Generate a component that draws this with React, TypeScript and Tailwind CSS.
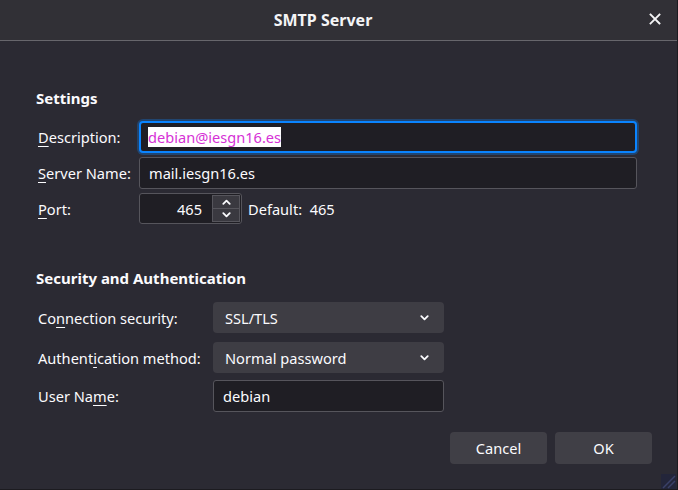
import React from "react";

const font = { fontFamily: '"Noto Sans", "Open Sans", sans-serif' };

function Chevron({ up = false, className = "" }: { up?: boolean; className?: string }) {
  return (
    <svg width="9" height="6" viewBox="0 0 9 6" className={className}>
      <path
        d={up ? "M1.3 4.8 L4.5 1.6 L7.7 4.8" : "M1.3 1.2 L4.5 4.4 L7.7 1.2"}
        fill="none"
        stroke="#fbfbfe"
        strokeWidth="1.8"
        strokeLinecap="round"
        strokeLinejoin="round"
      />
    </svg>
  );
}

function Select({ value }: { value: string }) {
  return (
    <div className="w-[231px] h-[31px] rounded-[4px] bg-[#3e3d44] flex items-center justify-between pl-[12px] pr-[15px] text-[#fbfbfe]">
      <span>{value}</span>
      <Chevron />
    </div>
  );
}

export default function App() {
  return (
    <div
      style={font}
      className="relative w-[678px] h-[490px] bg-[#2b2a33] flex flex-col border-r border-b border-[#1c1b20] text-[#fbfbfe] text-[14.6px] leading-[20px] overflow-hidden"
    >
      {/* Title bar */}
      <div className="h-[41px] shrink-0 bg-[#313036] border-b border-[#67666c] flex items-center relative">
        <div className="flex-1 flex justify-center pr-[31px] font-bold text-[16px] text-[#f4f4f6]">SMTP Server</div>
        <div className="absolute right-[16px] top-[13px]">
          <svg width="12" height="12" viewBox="0 0 12 12">
            <path d="M1.5 1.5 L10.5 10.5 M10.5 1.5 L1.5 10.5" stroke="#f4f4f6" strokeWidth="1.8" strokeLinecap="square" />
          </svg>
        </div>
      </div>

      {/* Body */}
      <div className="flex-1 flex flex-col pl-[36px] pr-[25px] pt-[47px]">
        <div className="font-bold text-[15px] leading-[20px]">Settings</div>

        <div className="mt-[13px] flex flex-col gap-[4px]">
          <div className="flex items-center">
            <div className="w-[103px] pl-[2px]">
              <span className="underline underline-offset-[3px]">D</span>escription:
            </div>
            <div className="flex-1 mr-[15px] h-[32px] rounded-[4px] border-2 border-[#0a84ff] bg-[#1f1e24] shadow-[0_0_0_2px_rgba(10,132,255,0.3)] flex items-center pl-[7px]">
              <span className="bg-white text-[#d631d6] h-[20px] leading-[20px]">debian@iesgn16.es</span>
            </div>
          </div>
          <div className="flex items-center">
            <div className="w-[103px] pl-[2px]">
              <span className="underline underline-offset-[3px]">S</span>erver Name:
            </div>
            <div className="flex-1 mr-[15px] h-[32px] rounded-[3px] border border-[#56555c] bg-[#1f1e24] flex items-center pl-[9px]">
              mail.iesgn16.es
            </div>
          </div>
          <div className="flex items-center">
            <div className="w-[103px] pl-[2px]">
              <span className="underline underline-offset-[3px]">P</span>ort:
            </div>
            <div className="w-[103px] h-[31px] rounded-[3px] border border-[#56555c] bg-[#1f1e24] flex items-center">
              <div className="flex-1 text-right pr-[10px]">465</div>
              <div className="w-[28px] h-[27px] mr-[1px] flex flex-col border border-[#56555c] bg-[#3a3940]">
                <div className="flex-1 flex items-center justify-center border-b border-[#56555c]">
                  <Chevron up />
                </div>
                <div className="flex-1 flex items-center justify-center">
                  <Chevron />
                </div>
              </div>
            </div>
            <div className="ml-[6px]">Default:&nbsp; 465</div>
          </div>
        </div>

        <div className="mt-[44px] font-bold text-[15px] leading-[20px]">Security and Authentication</div>

        <div className="mt-[14px] flex items-center">
          <div className="w-[177px] pl-[2px]">
            Co<span className="underline underline-offset-[3px]">n</span>nection security:
          </div>
          <Select value="SSL/TLS" />
        </div>
        <div className="mt-[9px] flex items-center">
          <div className="w-[177px] pl-[2px]">
            Authent<span className="underline underline-offset-[3px]">i</span>cation method:
          </div>
          <Select value="Normal password" />
        </div>
        <div className="mt-[7px] flex items-center">
          <div className="w-[177px] pl-[2px]">
            User Na<span className="underline underline-offset-[3px]">m</span>e:
          </div>
          <div className="w-[231px] h-[32px] rounded-[3px] border border-[#56555c] bg-[#1f1e24] flex items-center pl-[9px]">
            debian
          </div>
        </div>

        <div className="mt-[20px] flex justify-end gap-[8px]">
          <div className="w-[97px] h-[32px] rounded-[4px] bg-[#403f46] flex items-center justify-center">Cancel</div>
          <div className="w-[97px] h-[32px] rounded-[4px] bg-[#403f46] flex items-center justify-center">OK</div>
        </div>
      </div>

      <div className="absolute left-[661px] top-[474px] w-[15px] h-[15px]">
        <svg width="15" height="15" viewBox="0 0 15 15">
          <rect width="15" height="15" fill="#23253a" />
          <path d="M2 14 L14 2 M7 14 L14 7" stroke="#3a4068" strokeWidth="1.5" />
        </svg>
      </div>
    </div>
  );
}
